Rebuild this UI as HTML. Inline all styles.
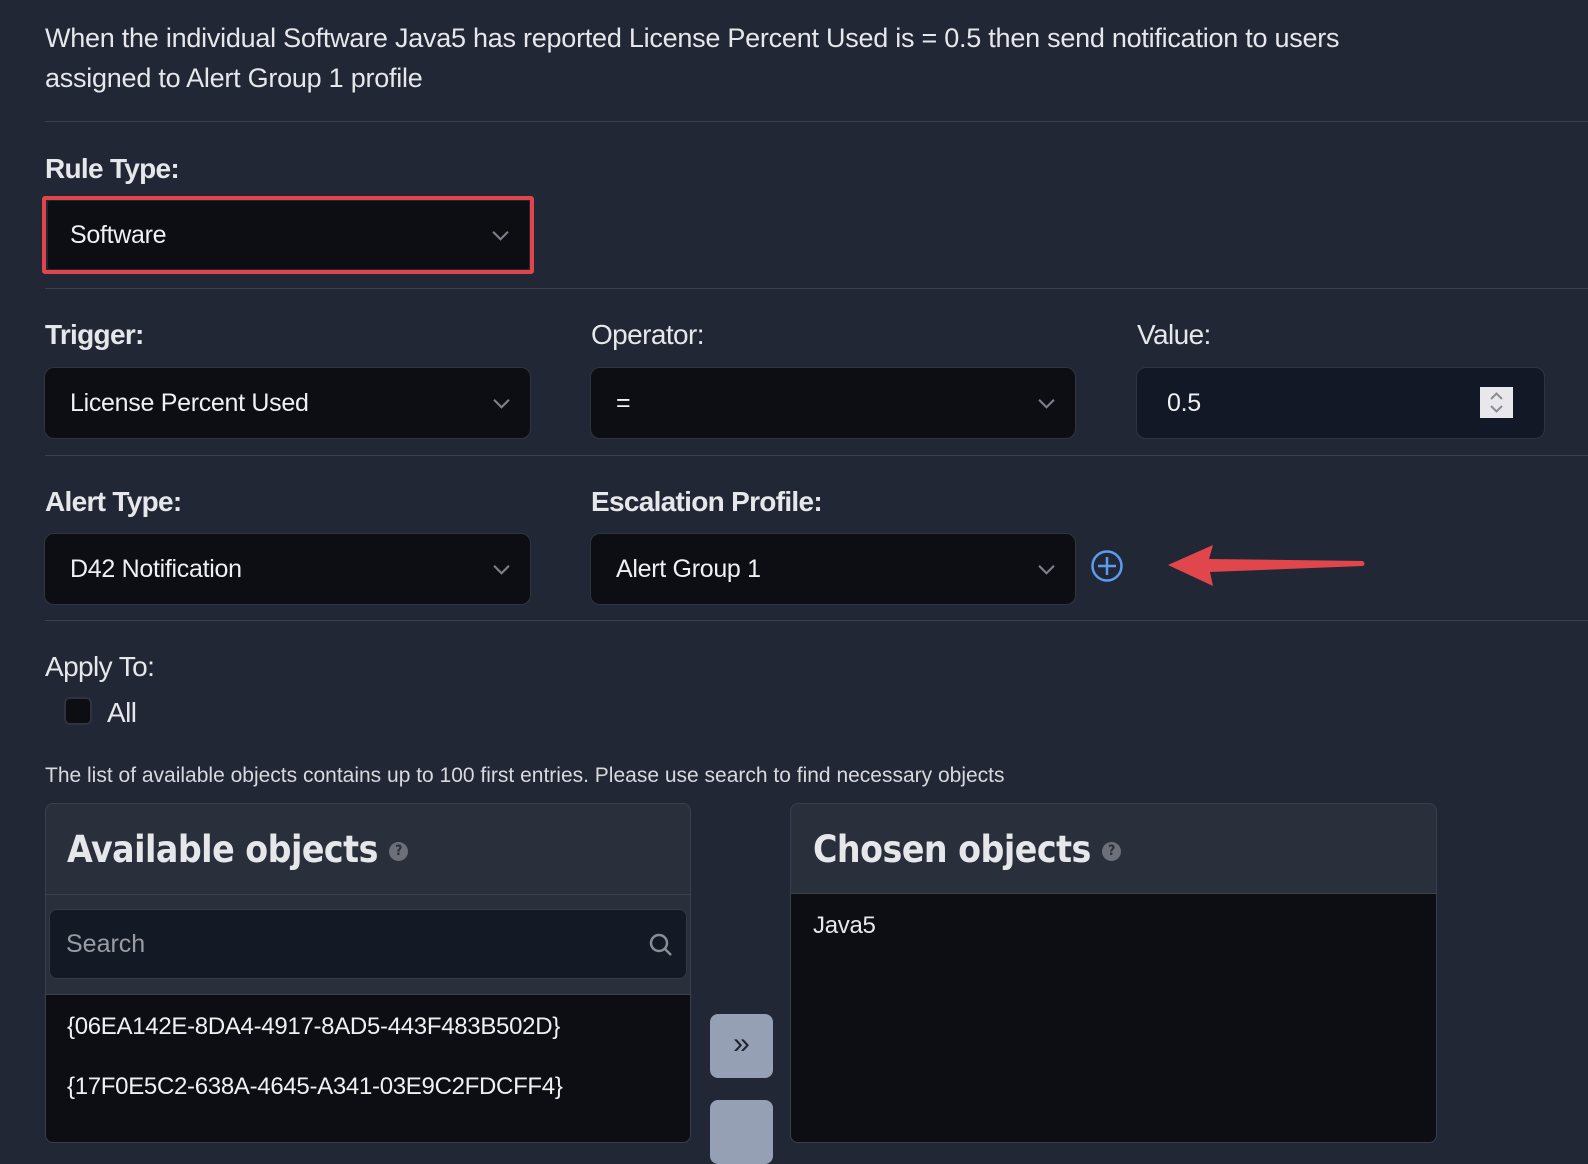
<!DOCTYPE html>
<html><head><meta charset="utf-8"><style>
*{box-sizing:border-box;margin:0;padding:0}
body{width:1588px;height:1136px;overflow:hidden;background:#222735;font-family:"Liberation Sans",sans-serif;color:#e6e7ea;position:relative}
.a{position:absolute}
.t{font-size:27px;letter-spacing:-0.25px;line-height:40px}
.hr{position:absolute;left:45px;right:0;height:1px;background:#3b404c}
.lbl{font-size:28px;font-weight:bold;letter-spacing:-0.7px}
.lbl2{font-size:28px;letter-spacing:-0.6px}
.sel{position:absolute;height:70px;background:#0c0e13;border-radius:9px;box-shadow:0 0 0 1px #30343f;font-size:25px;letter-spacing:-0.3px;padding-left:25px;line-height:70px;color:#f0f0f2}
.chev{position:absolute;right:20px;top:27px;width:17px;height:17px;display:block}
</style></head><body>
<div class="a t" style="left:45px;top:18px;width:1440px">When the individual Software Java5 has reported License Percent Used is = 0.5 then send notification to users<br>assigned to Alert Group 1 profile</div>
<div class="hr" style="top:121px"></div>
<div class="a lbl" style="left:45px;top:153px">Rule Type:</div>
<div class="a" style="left:42px;top:196px;width:492px;height:78px;border:4px solid #e0454c;border-radius:3px"></div>
<div class="sel" style="left:48px;top:201px;width:481px;height:68px;line-height:68px;border-radius:2px;box-shadow:none;padding-left:22px">Software<svg class="chev" viewBox="0 0 16 16" style="top:26px"><path d="M1 4.5L8 11.5L15 4.5" stroke="#7c808a" stroke-width="2" fill="none"/></svg></div>
<div class="hr" style="top:288px"></div>
<div class="a lbl" style="left:45px;top:319px">Trigger:</div>
<div class="a lbl2" style="left:591px;top:319px">Operator:</div>
<div class="a lbl2" style="left:1137px;top:319px">Value:</div>
<div class="sel" style="left:45px;top:368px;width:485px">License Percent Used<svg class="chev" viewBox="0 0 16 16"><path d="M1 4.5L8 11.5L15 4.5" stroke="#7c808a" stroke-width="2" fill="none"/></svg></div>
<div class="sel" style="left:591px;top:368px;width:484px">=<svg class="chev" viewBox="0 0 16 16"><path d="M1 4.5L8 11.5L15 4.5" stroke="#7c808a" stroke-width="2" fill="none"/></svg></div>
<div class="sel" style="left:1137px;top:368px;width:407px;background:#121826;padding-left:30px">0.5</div>
<svg class="a" style="left:1480px;top:387px;display:block" width="33" height="31" viewBox="0 0 33 31"><rect width="33" height="31" fill="#e8e8ec"/><path d="M11 12L16.5 6.5L22 12M11 19L16.5 24.5L22 19" stroke="#8a8c94" stroke-width="2" fill="none"/></svg>
<div class="hr" style="top:455px"></div>
<div class="a lbl" style="left:45px;top:486px">Alert Type:</div>
<div class="a lbl" style="left:591px;top:486px">Escalation Profile:</div>
<div class="sel" style="left:45px;top:534px;width:485px">D42 Notification<svg class="chev" viewBox="0 0 16 16"><path d="M1 4.5L8 11.5L15 4.5" stroke="#7c808a" stroke-width="2" fill="none"/></svg></div>
<div class="sel" style="left:591px;top:534px;width:484px">Alert Group 1<svg class="chev" viewBox="0 0 16 16"><path d="M1 4.5L8 11.5L15 4.5" stroke="#7c808a" stroke-width="2" fill="none"/></svg></div>
<svg class="a" style="left:1089px;top:549px" width="36" height="36" viewBox="0 0 36 36"><circle cx="18" cy="17" r="14.5" stroke="#5b9cf0" stroke-width="2.5" fill="none"/><path d="M18 8V26M9 17H27" stroke="#5b9cf0" stroke-width="2.5"/></svg>
<svg class="a" style="left:1165px;top:540px" width="205" height="50" viewBox="0 0 205 50"><path d="M3 25L48 5L44 19L198 21Q201 24 198 26L45 32L48 46Z" fill="#e2464d"/></svg>
<div class="hr" style="top:620px"></div>
<div class="a lbl2" style="left:45px;top:651px">Apply To:</div>
<div class="a" style="left:64px;top:697px;width:28px;height:28px;background:#0c0e13;border:2px solid #2f333d;border-radius:6px"></div>
<div class="a lbl2" style="left:107px;top:697px">All</div>
<div class="a" style="left:45px;top:764px;font-size:21px;letter-spacing:0px;color:#d8d9dd">The list of available objects contains up to 100 first entries. Please use search to find necessary objects</div>
<div class="a" style="left:45px;top:803px;width:646px;height:340px;background:#292f3b;border:1px solid #3a3f4a;border-radius:8px;overflow:hidden">
<div class="a" style="left:21px;top:24px;font-size:37px;font-weight:bold;letter-spacing:-0.5px;font-family:'DejaVu Sans Condensed','DejaVu Sans',sans-serif">Available objects <span style="display:inline-block;width:19px;height:19px;border-radius:50%;background:#6d7079;color:#292f3b;font-size:14px;text-align:center;line-height:19px;vertical-align:middle">?</span></div>
<div class="a" style="left:0;right:0;top:90px;height:1px;background:#3c414c"></div>
<div class="a" style="left:3px;top:105px;width:638px;height:70px;background:#141926;border:1px solid #353a46;border-radius:8px;font-size:25px;color:#9a9ca3;line-height:68px;padding-left:16px">Search
<svg class="a" style="right:12px;top:22px" width="26" height="26" viewBox="0 0 26 26"><circle cx="11" cy="11" r="8" stroke="#8a8d95" stroke-width="2.5" fill="none"/><path d="M17 17L23 23" stroke="#8a8d95" stroke-width="2.5"/></svg></div>
<div class="a" style="left:0;right:0;top:190px;bottom:0;background:#0c0e13;border-top:1px solid #3c414c;font-size:24px;letter-spacing:-0.3px;color:#f0f0f2">
<div class="a" style="left:21px;top:18px">{06EA142E-8DA4-4917-8AD5-443F483B502D}</div>
<div class="a" style="left:21px;top:78px">{17F0E5C2-638A-4645-A341-03E9C2FDCFF4}</div></div></div>
<div class="a" style="left:710px;top:1014px;width:63px;height:64px;background:#96a0b4;border-radius:8px;color:#1e2330;font-size:30px;text-align:center;line-height:60px">»</div>
<div class="a" style="left:710px;top:1100px;width:63px;height:64px;background:#96a0b4;border-radius:8px"></div>
<div class="a" style="left:790px;top:803px;width:647px;height:340px;background:#292f3b;border:1px solid #3a3f4a;border-radius:8px;overflow:hidden">
<div class="a" style="left:22px;top:24px;font-size:37px;font-weight:bold;letter-spacing:-0.5px;font-family:'DejaVu Sans Condensed','DejaVu Sans',sans-serif">Chosen objects <span style="display:inline-block;width:19px;height:19px;border-radius:50%;background:#6d7079;color:#292f3b;font-size:14px;text-align:center;line-height:19px;vertical-align:middle">?</span></div>
<div class="a" style="left:0;right:0;top:89px;bottom:0;background:#0c0e13;border-top:1px solid #3c414c;font-size:24px;letter-spacing:-0.3px">
<div class="a" style="left:22px;top:18px">Java5</div></div></div>
</body></html>
